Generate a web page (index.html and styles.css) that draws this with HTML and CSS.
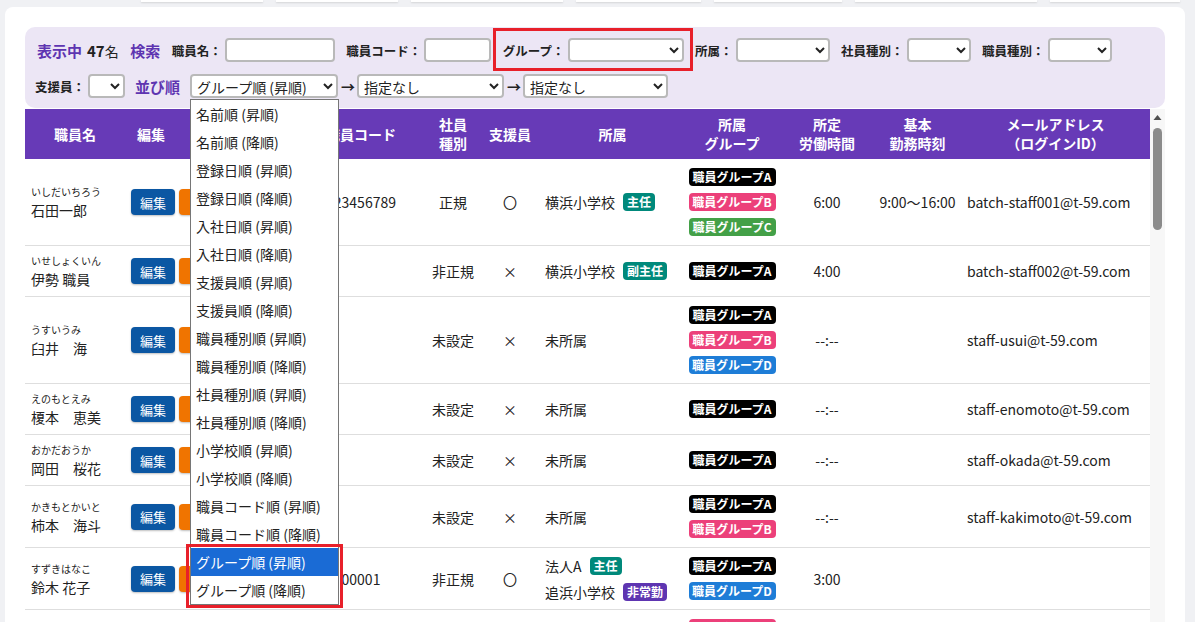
FILE: index.html
```html
<!DOCTYPE html>
<html lang="ja">

<head>
    <meta charset="UTF-8">
    <meta name="viewport" content="width=device-width, initial-scale=1.0">
    <title>職員一覧</title>
    <link rel="stylesheet" href="styles.css">
</head>

<body>
    <div class="topbar">
        <span class="t1"></span><span class="t2"></span><span class="t3"></span><span class="t4"></span>
        <span class="t5"></span><span class="t6"></span><span class="t7"></span>
    </div>
    <div class="card">
        <div class="filters">
            <div class="filterRow">
                <span class="count"><b class="accent">表示中</b><span><b class="num">47</b>名</span></span>
                <b class="accent">検索</b>
                <label class="field">職員名：<input type="text" class="w110"></label>
                <label class="field">職員コード：<input type="text" class="w67"></label>
                <label class="field marked">グループ：<select class="w116"><option></option></select></label>
                <label class="field">所属：<select class="w94"><option></option></select></label>
                <label class="field">社員種別：<select class="w64"><option></option></select></label>
                <label class="field">職員種別：<select class="w64"><option></option></select></label>
            </div>
            <div class="filterRow second">
                <label class="field">支援員：<select class="w37"><option></option></select></label>
                <b class="accent">並び順</b>
                <div class="sort">
                    <div class="sortField">
                        <select class="w148"><option>グループ順 (昇順)</option></select>
                        <div class="sortMenu">
                            <div class="opt">名前順 (昇順)</div>
                            <div class="opt">名前順 (降順)</div>
                            <div class="opt">登録日順 (昇順)</div>
                            <div class="opt">登録日順 (降順)</div>
                            <div class="opt">入社日順 (昇順)</div>
                            <div class="opt">入社日順 (降順)</div>
                            <div class="opt">支援員順 (昇順)</div>
                            <div class="opt">支援員順 (降順)</div>
                            <div class="opt">職員種別順 (昇順)</div>
                            <div class="opt">職員種別順 (降順)</div>
                            <div class="opt">社員種別順 (昇順)</div>
                            <div class="opt">社員種別順 (降順)</div>
                            <div class="opt">小学校順 (昇順)</div>
                            <div class="opt">小学校順 (降順)</div>
                            <div class="opt">職員コード順 (昇順)</div>
                            <div class="opt">職員コード順 (降順)</div>
                            <div class="optGroup">
                                <div class="opt selected">グループ順 (昇順)</div>
                                <div class="opt">グループ順 (降順)</div>
                            </div>
                        </div>
                    </div>
                    <span class="arrow">→</span>
                    <select class="w147"><option>指定なし</option></select>
                    <span class="arrow">→</span>
                    <select class="w145"><option>指定なし</option></select>
                </div>
            </div>
        </div>

        <div class="list">
            <div class="tableArea">
                <table>
                    <colgroup>
                        <col style="width:100px">
                        <col style="width:52px">
                        <col style="width:70px">
                        <col style="width:48px">
                        <col style="width:132px">
                        <col style="width:52px">
                        <col style="width:62px">
                        <col style="width:143px">
                        <col style="width:96px">
                        <col style="width:94px">
                        <col style="width:87px">
                        <col style="width:189px">
                    </colgroup>
                    <thead>
                        <tr>
                            <th>職員名</th>
                            <th>編集</th>
                            <th class="left">削除</th>
                            <th></th>
                            <th>職員コード</th>
                            <th>社員<br>種別</th>
                            <th>支援員</th>
                            <th>所属</th>
                            <th>所属<br>グループ</th>
                            <th>所定<br>労働時間</th>
                            <th>基本<br>勤務時刻</th>
                            <th>メールアドレス<br>（ログインID）</th>
                        </tr>
                    </thead>
                    <tbody>
                        <tr>
                            <td class="name"><div class="kana">いしだいちろう</div><div class="full">石田一郎</div></td>
                            <td class="btnCell"><button class="btn edit">編集</button></td>
                            <td class="btnCell del"><button class="btn remove">削除</button></td>
                            <td></td>
                            <td>123456789</td>
                            <td>正規</td>
                            <td>〇</td>
                            <td class="belong"><div class="line">横浜小学校<span class="role teal">主任</span></div></td>
                            <td class="groups"><span class="grp black">職員グループA</span><span class="grp pink">職員グループB</span><span class="grp green">職員グループC</span></td>
                            <td>6:00</td>
                            <td>9:00～16:00</td>
                            <td class="mail">batch-staff001@t-59.com</td>
                        </tr>
                        <tr>
                            <td class="name"><div class="kana">いせしょくいん</div><div class="full">伊勢 職員</div></td>
                            <td class="btnCell"><button class="btn edit">編集</button></td>
                            <td class="btnCell del"><button class="btn remove">削除</button></td>
                            <td></td>
                            <td></td>
                            <td>非正規</td>
                            <td>×</td>
                            <td class="belong"><div class="line">横浜小学校<span class="role teal">副主任</span></div></td>
                            <td class="groups"><span class="grp black">職員グループA</span></td>
                            <td>4:00</td>
                            <td></td>
                            <td class="mail">batch-staff002@t-59.com</td>
                        </tr>
                        <tr>
                            <td class="name"><div class="kana">うすいうみ</div><div class="full">臼井　海</div></td>
                            <td class="btnCell"><button class="btn edit">編集</button></td>
                            <td class="btnCell del"><button class="btn remove">削除</button></td>
                            <td></td>
                            <td></td>
                            <td>未設定</td>
                            <td>×</td>
                            <td class="belong"><div class="line">未所属</div></td>
                            <td class="groups"><span class="grp black">職員グループA</span><span class="grp pink">職員グループB</span><span class="grp blue">職員グループD</span></td>
                            <td>--:--</td>
                            <td></td>
                            <td class="mail">staff-usui@t-59.com</td>
                        </tr>
                        <tr>
                            <td class="name"><div class="kana">えのもとえみ</div><div class="full">榎本　恵美</div></td>
                            <td class="btnCell"><button class="btn edit">編集</button></td>
                            <td class="btnCell del"><button class="btn remove">削除</button></td>
                            <td></td>
                            <td></td>
                            <td>未設定</td>
                            <td>×</td>
                            <td class="belong"><div class="line">未所属</div></td>
                            <td class="groups"><span class="grp black">職員グループA</span></td>
                            <td>--:--</td>
                            <td></td>
                            <td class="mail">staff-enomoto@t-59.com</td>
                        </tr>
                        <tr>
                            <td class="name"><div class="kana">おかだおうか</div><div class="full">岡田　桜花</div></td>
                            <td class="btnCell"><button class="btn edit">編集</button></td>
                            <td class="btnCell del"><button class="btn remove">削除</button></td>
                            <td></td>
                            <td></td>
                            <td>未設定</td>
                            <td>×</td>
                            <td class="belong"><div class="line">未所属</div></td>
                            <td class="groups"><span class="grp black">職員グループA</span></td>
                            <td>--:--</td>
                            <td></td>
                            <td class="mail">staff-okada@t-59.com</td>
                        </tr>
                        <tr>
                            <td class="name"><div class="kana">かきもとかいと</div><div class="full">柿本　海斗</div></td>
                            <td class="btnCell"><button class="btn edit">編集</button></td>
                            <td class="btnCell del"><button class="btn remove">削除</button></td>
                            <td></td>
                            <td></td>
                            <td>未設定</td>
                            <td>×</td>
                            <td class="belong"><div class="line">未所属</div></td>
                            <td class="groups"><span class="grp black">職員グループA</span><span class="grp pink">職員グループB</span></td>
                            <td>--:--</td>
                            <td></td>
                            <td class="mail">staff-kakimoto@t-59.com</td>
                        </tr>
                        <tr>
                            <td class="name"><div class="kana">すずきはなこ</div><div class="full">鈴木 花子</div></td>
                            <td class="btnCell"><button class="btn edit">編集</button></td>
                            <td class="btnCell del"><button class="btn remove">削除</button></td>
                            <td></td>
                            <td>00001</td>
                            <td>非正規</td>
                            <td>〇</td>
                            <td class="belong">
                                <div class="line">法人A<span class="role teal">主任</span></div>
                                <div class="line">追浜小学校<span class="role purple">非常勤</span></div>
                            </td>
                            <td class="groups"><span class="grp black">職員グループA</span><span class="grp blue">職員グループD</span></td>
                            <td>3:00</td>
                            <td></td>
                            <td class="mail"></td>
                        </tr>
                        <tr>
                            <td class="name"><div class="kana">たなかけん</div><div class="full">田中 健</div></td>
                            <td class="btnCell"><button class="btn edit">編集</button></td>
                            <td class="btnCell del"><button class="btn remove">削除</button></td>
                            <td></td>
                            <td></td>
                            <td>未設定</td>
                            <td>×</td>
                            <td class="belong"><div class="line">未所属</div></td>
                            <td class="groups"><span class="grp pink">職員グループB</span><span class="grp blue">職員グループD</span></td>
                            <td>--:--</td>
                            <td></td>
                            <td class="mail"></td>
                        </tr>
                    </tbody>
                </table>
            </div>
            <div class="scrollbar">
                <svg class="scrollUp" width="15" height="17" viewBox="0 0 15 17">
                    <path d="M3.5 11 L7.5 6 L11.5 11 Z" fill="#505050" />
                </svg>
                <span class="thumb"></span>
            </div>
        </div>
    </div>
</body>

</html>
```

FILE: styles.css
```css
* {
    margin: 0;
    padding: 0;
    box-sizing: border-box;
}

html,
body {
    height: 100%;
    overflow: hidden;
}

body {
    background-color: #f0f1f4;
    font-family: "Noto Sans CJK JP", "Noto Sans", sans-serif;
    color: #222;
}

.topbar {
    display: flex;
    gap: 13px;
    height: 2px;
    padding-left: 141px;
}

.topbar span {
    background-color: #fff;
    box-shadow: 0 1px 2px rgba(0, 0, 0, 0.12);
}

.t1, .t2 { width: 122px; }
.t3 { width: 152px; }
.t4 { width: 125px; }
.t5 { width: 128px; }
.t6 { width: 182px; }
.t7 { width: 130px; }

.card {
    background-color: #fff;
    margin: 5px 10px 0 5px;
    padding: 20px 20px 0;
    border-radius: 8px 8px 0 0;
    height: calc(100% - 7px);
    display: flex;
    flex-direction: column;
}

/* filter panel */
.filters {
    background-color: #ece6f5;
    border-radius: 10px;
    padding: 11px 10px 10px;
    display: flex;
    flex-direction: column;
    gap: 12px;
    position: relative;
    z-index: 2;
}

.filterRow {
    display: flex;
    align-items: center;
    gap: 11.5px;
    height: 24px;
}

.filterRow.second {
    gap: 10px;
}

.accent {
    color: #5e35b1;
    font-size: 15px;
}

.count {
    display: flex;
    align-items: baseline;
    gap: 5px;
    margin-left: 2px;
    font-size: 14px;
}

.num {
    font-size: 15px;
}

.field {
    display: flex;
    align-items: center;
    gap: 3px;
    font-size: 12.5px;
    font-weight: 700;
    color: #222;
}

input,
select {
    height: 24px;
    border: 2px solid #b9b9b9;
    border-radius: 4px;
    background-color: #fff;
    font-family: inherit;
    font-size: 14px;
    color: #222;
    padding: 0 1px;
}

.w110 { width: 110px; }
.w67 { width: 67px; }
.w116 { width: 116px; }
.w94 { width: 94px; }
.w64 { width: 64px; }
.w37 { width: 37px; }
.w148 { width: 148px; }
.w147 { width: 147px; }
.w145 { width: 145px; }

.marked {
    position: relative;
}

.marked::after {
    content: "";
    position: absolute;
    top: -10px;
    bottom: -9px;
    left: -10px;
    right: -9px;
    border: 3px solid #e8202a;
}

.sort {
    display: flex;
    align-items: center;
    gap: 3px;
}

.arrow {
    font-size: 14px;
    font-weight: 700;
    width: 13px;
    text-align: center;
}

.sortField {
    position: relative;
}

/* open dropdown of the sort select */
.sortMenu {
    position: absolute;
    top: 25px;
    left: 0;
    width: 149px;
    background-color: #fff;
    border: 1px solid #767676;
    z-index: 5;
}

.opt {
    height: 28px;
    line-height: 28px;
    padding-left: 5px;
    font-size: 14px;
    color: #222;
    white-space: nowrap;
}

.opt.selected {
    background-color: #1a6bd5;
    color: #fff;
}

.optGroup {
    position: relative;
}

.optGroup::after {
    content: "";
    position: absolute;
    top: -4px;
    bottom: -4px;
    left: -5px;
    right: -5px;
    border: 3px solid #e8202a;
}

/* staff table */
.list {
    display: flex;
    flex: 1;
    min-height: 0;
    margin-top: 1px;
}

.tableArea {
    width: 1125px;
    overflow: hidden;
}

table {
    border-collapse: collapse;
    table-layout: fixed;
    width: 1125px;
}

th {
    background-color: #673ab7;
    color: #fff;
    font-size: 14px;
    font-weight: 700;
    line-height: 19px;
    height: 50px;
    padding: 0 2px;
    white-space: nowrap;
}

th.left {
    text-align: left;
    padding-left: 13px;
}

td {
    padding: 7px 4px;
    border-bottom: 1px solid #dedede;
    font-size: 14px;
    text-align: center;
    vertical-align: middle;
    white-space: nowrap;
}

td.name {
    text-align: left;
    padding-left: 6px;
}

.kana {
    font-size: 10px;
    line-height: 16px;
}

.full {
    font-size: 14px;
    line-height: 20px;
}

td.btnCell {
    text-align: left;
    padding-left: 6px;
}

td.del {
    padding-left: 2px;
}

.btn {
    width: 44px;
    height: 26px;
    border: 0;
    border-radius: 4px;
    color: #fff;
    font-family: inherit;
    font-size: 13px;
    box-shadow: 0 1px 2px rgba(0, 0, 0, 0.25);
}

.edit {
    background-color: #0b57a3;
}

.remove {
    width: 64px;
    background-color: #f07400;
}

td.belong {
    text-align: left;
}

.line {
    display: flex;
    align-items: center;
    gap: 8px;
    line-height: 20px;
}

.line + .line {
    margin-top: 6px;
}

.role {
    color: #fff;
    font-size: 12px;
    font-weight: 700;
    line-height: 18px;
    padding: 0 4px;
    border-radius: 4px;
}

.teal {
    background-color: #00897b;
}

.purple {
    background-color: #5e35b1;
}

td.groups {
    padding: 9px 4px;
}

.grp {
    display: block;
    width: 87px;
    margin: 0 auto;
    height: 18px;
    line-height: 18px;
    border-radius: 4px;
    color: #fff;
    font-size: 12px;
    font-weight: 700;
}

.grp + .grp {
    margin-top: 7px;
}

.black { background-color: #000; }
.pink { background-color: #ec407a; }
.green { background-color: #43a047; }
.blue { background-color: #1e7dd7; }

td.mail {
    text-align: left;
    padding-left: 6px;
}

/* fake scrollbar of the table box */
.scrollbar {
    width: 15px;
    background-color: #f7f7f7;
    display: flex;
    flex-direction: column;
    align-items: center;
}

.thumb {
    width: 9px;
    height: 102px;
    margin-top: 2px;
    background-color: #8b8b8b;
    border-radius: 5px;
}
```
